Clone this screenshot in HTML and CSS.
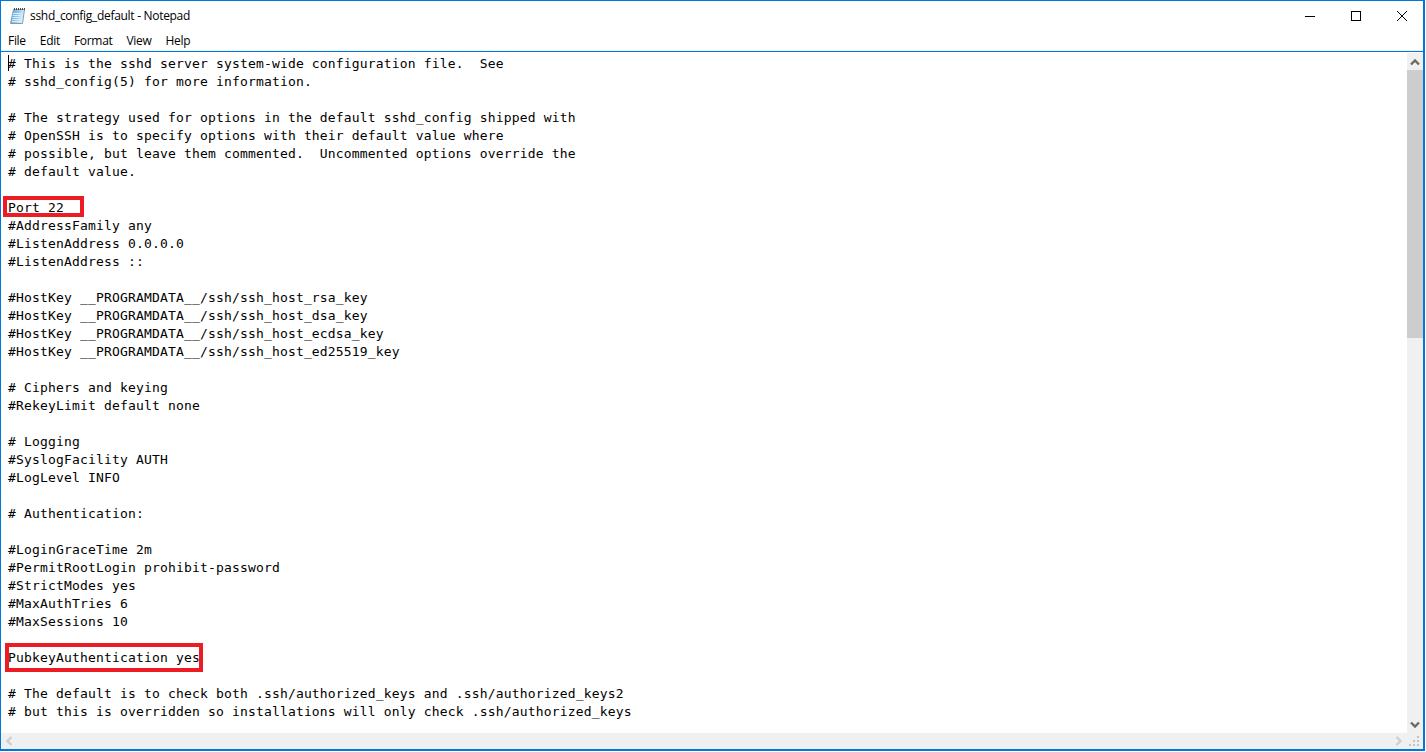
FILE: index.html
```html
<!DOCTYPE html>
<html lang="en">
<head>
<meta charset="utf-8">
<title>sshd_config_default - Notepad</title>
<link rel="stylesheet" href="styles.css">
</head>
<body>
<div class="window">
  <header class="titlebar">
    <svg class="app-icon" width="16" height="18" viewBox="0 0 16 18">
      <defs>
        <linearGradient id="page" x1="0" y1="0" x2="1" y2="0.3">
          <stop offset="0" stop-color="#4f9bd4"/>
          <stop offset="0.6" stop-color="#9ccbec"/>
          <stop offset="1" stop-color="#e6f3fb"/>
        </linearGradient>
      </defs>
      <path d="M3.5 2.5 H14.5 L12.5 16.5 H0.5 Z" fill="url(#page)" stroke="#7f9db3"/>
      <path d="M3 6.5 H12.5 M2.7 8.5 H12.2 M2.4 10.5 H12 M2.1 12.5 H11.7 M1.8 14.5 H11.4" stroke="#d8ecf8"/>
      <path d="M4 1h1v2H4zM6 1h1v2H6zM8 1h1v2H8zM10 1h1v2h-1zM12 1h1v2h-1zM14 1h1v2h-1z" fill="#4a4a4a"/>
    </svg>
    <span class="title">sshd_config_default - Notepad</span>
    <div class="controls">
      <span class="control"><svg width="12" height="12" viewBox="0 0 12 12"><path d="M1 6.5H11" stroke="#000"/></svg></span>
      <span class="control"><svg width="12" height="12" viewBox="0 0 12 12"><rect x="1.5" y="1.5" width="9" height="9" fill="none" stroke="#000"/></svg></span>
      <span class="control"><svg width="12" height="12" viewBox="0 0 12 12"><path d="M1 1L11 11M11 1L1 11" stroke="#000"/></svg></span>
    </div>
  </header>
  <nav class="menubar">
    <span>File</span><span>Edit</span><span>Format</span><span>View</span><span>Help</span>
  </nav>
  <main class="client">
    <div class="editor-row">
      <div class="editor">
        <pre class="text"># This is the sshd server system-wide configuration file.  See
# sshd_config(5) for more information.

# The strategy used for options in the default sshd_config shipped with
# OpenSSH is to specify options with their default value where
# possible, but leave them commented.  Uncommented options override the
# default value.

Port 22
#AddressFamily any
#ListenAddress 0.0.0.0
#ListenAddress ::

#HostKey __PROGRAMDATA__/ssh/ssh_host_rsa_key
#HostKey __PROGRAMDATA__/ssh/ssh_host_dsa_key
#HostKey __PROGRAMDATA__/ssh/ssh_host_ecdsa_key
#HostKey __PROGRAMDATA__/ssh/ssh_host_ed25519_key

# Ciphers and keying
#RekeyLimit default none

# Logging
#SyslogFacility AUTH
#LogLevel INFO

# Authentication:

#LoginGraceTime 2m
#PermitRootLogin prohibit-password
#StrictModes yes
#MaxAuthTries 6
#MaxSessions 10

PubkeyAuthentication yes

# The default is to check both .ssh/authorized_keys and .ssh/authorized_keys2
# but this is overridden so installations will only check .ssh/authorized_keys</pre>
        <span class="caret"></span>
        <span class="mark mark-port"></span>
        <span class="mark mark-pubkey"></span>
      </div>
      <div class="vscroll">
        <span class="arrow"><svg width="10" height="8" viewBox="0 0 10 8"><path d="M1 6.5L5 2.5L9 6.5" fill="none" stroke="#6e6a60" stroke-width="2.4"/></svg></span>
        <span class="thumb"></span>
        <span class="track"></span>
        <span class="arrow"><svg width="10" height="8" viewBox="0 0 10 8"><path d="M1 1.5L5 5.5L9 1.5" fill="none" stroke="#6e6a60" stroke-width="2.4"/></svg></span>
      </div>
    </div>
    <div class="hscroll">
      <span class="arrow"><svg width="8" height="10" viewBox="0 0 8 10"><path d="M6.5 1L2.5 5L6.5 9" fill="none" stroke="#cfcfcf" stroke-width="2.4"/></svg></span>
      <span class="track"></span>
      <span class="arrow"><svg width="8" height="10" viewBox="0 0 8 10"><path d="M1.5 1L5.5 5L1.5 9" fill="none" stroke="#cfcfcf" stroke-width="2.4"/></svg></span>
      <span class="grip"><svg width="12" height="12" viewBox="0 0 12 12"><path d="M8 1h2v2H8zM4 5h2v2H4zM8 5h2v2H8zM0 9h2v2H0zM4 9h2v2H4zM8 9h2v2H8z" fill="#c4c4c4"/></svg></span>
    </div>
  </main>
</div>
</body>
</html>
```
FILE: styles.css
```css
* { box-sizing: border-box; }
html, body { margin: 0; height: 100%; background: #fff; overflow: hidden; }
.window {
  width: 1425px;
  height: 751px;
  display: flex;
  flex-direction: column;
  border: 1px solid #0078d7;
  border-bottom-width: 2px;
  border-right-width: 2px;
  font-family: "Open Sans", "Liberation Sans", sans-serif;
  color: #000;
  background: #fff;
}
.titlebar {
  height: 29px;
  flex: none;
  display: flex;
  align-items: center;
  padding-left: 9px;
}
.app-icon { flex: none; }
.title { margin-left: 4px; font-size: 12px; letter-spacing: -0.3px; }
.controls { margin-left: auto; margin-right: -2px; display: flex; height: 29px; }
.control { width: 46px; display: flex; align-items: center; justify-content: center; }
.menubar {
  flex: none;
  height: 21px;
  display: flex;
  align-items: center;
  gap: 14px;
  padding-left: 7px;
  font-size: 12px;
  letter-spacing: -0.3px;
  border-bottom: 1px solid #f0f0f0;
}
.client {
  flex: 1;
  min-height: 0;
  display: flex;
  flex-direction: column;
  border-top: 1px solid #0078d7;
}
.editor-row { flex: 1; min-height: 0; display: flex; }
.editor { flex: 1; min-width: 0; position: relative; overflow: hidden; }
.text {
  margin: 0;
  padding: 3px 0 0 7px;
  font-family: "DejaVu Sans Mono", "Liberation Mono", monospace;
  font-size: 13px;
  letter-spacing: 0.17px;
  line-height: 18px;
  color: #000;
}
.caret { position: absolute; left: 7px; top: 3px; width: 1px; height: 16px; background: #000; }
.mark { position: absolute; border: 4px solid #ed1c24; }
.mark-port { left: 2px; top: 144px; width: 81px; height: 21px; }
.mark-pubkey { left: 4px; top: 591px; width: 198px; height: 29px; }
.vscroll {
  width: 16px;
  flex: none;
  display: flex;
  flex-direction: column;
  background: #f0f0f0;
  margin-top: 1px;
}
.vscroll .arrow { height: 17px; flex: none; display: flex; align-items: center; justify-content: center; }
.thumb { height: 268px; flex: none; background: #cdcdcd; }
.track { flex: 1; }
.hscroll {
  height: 16px;
  flex: none;
  display: flex;
  align-items: center;
  background: #f0f0f0;
}
.hscroll .arrow { width: 16px; height: 16px; flex: none; display: flex; align-items: center; justify-content: center; }
.grip { width: 16px; height: 16px; flex: none; display: flex; align-items: flex-end; justify-content: flex-end; padding: 0 2px 2px 0; }
```
